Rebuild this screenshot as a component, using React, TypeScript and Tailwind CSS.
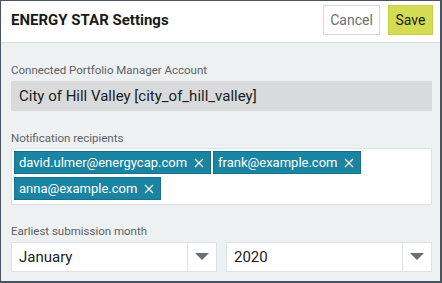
import React from "react";

const Caret = () => (
  <svg width="14" height="8" viewBox="0 0 14 8" className="block">
    <path d="M0 0 L14 0 L7 7 Z" fill="#6b6f73" />
  </svg>
);

const Chip = ({ email }: { email: string }) => (
  <div className="flex items-center h-[23px] bg-[#1a84a3] text-white text-[13px] pl-[4px] pr-[6px] gap-[7px] border border-[#17718c]">
    <span>{email}</span>
    <svg width="10" height="10" viewBox="0 0 10 10">
      <path d="M1 1 L9 9 M9 1 L1 9" stroke="white" strokeWidth="1.3" />
    </svg>
  </div>
);

const Select = ({ value }: { value: string }) => (
  <div className="flex flex-1 h-[30px] bg-white border border-[#dfe2e4]">
    <div className="flex-1 flex items-center pl-[7px] text-[15px] text-[#1c1c1c]">{value}</div>
    <div className="w-[29px] flex items-center justify-center border-l border-[#dfe2e4]">
      <Caret />
    </div>
  </div>
);

export default function App() {
  return (
    <div
      className="w-[442px] h-[283px] flex flex-col border-l border-t border-r-2 border-b-2 border-[#4a5461] bg-[#eef1f2] overflow-hidden"
      style={{ fontFamily: "Roboto, 'Liberation Sans', sans-serif" }}
    >
      <div className="h-[42px] bg-white border-b border-[#d9dcde] flex items-center pl-[10px] pr-[7px] shrink-0">
        <div className="flex-1 text-[15px] font-bold text-[#1a1a1a] pb-[3px]">ENERGY STAR Settings</div>
        <div className="flex gap-[8px] pb-[3px]">
          <div className="h-[30px] w-[57px] flex items-center justify-center border border-[#d6d9db] bg-white text-[14px] text-[#6b6f73]">Cancel</div>
          <div className="h-[30px] w-[45px] flex items-center justify-center border border-[#c8d03e] bg-[#d3dc52] text-[14px] text-[#1c1c1c]">Save</div>
        </div>
      </div>
      <div className="flex flex-col px-[10px] pr-[8px]">
        <div className="mt-[20px] text-[11.5px] text-[#5d6166] leading-[14px]">Connected Portfolio Manager Account</div>
        <div className="mt-[4px] h-[30px] bg-[#d8dadc] flex items-center pl-[8px] text-[15px] text-[#1c1c1c]">
          City of Hill Valley [city_of_hill_valley]
        </div>
        <div className="mt-[20px] text-[11.5px] text-[#5d6166] leading-[14px]">Notification recipients</div>
        <div className="mt-[3px] h-[57px] bg-white border border-[#dfe2e4] p-[2px] flex flex-wrap content-start gap-x-[2px] gap-y-[3px]">
          <Chip email="david.ulmer@energycap.com" />
          <Chip email="frank@example.com" />
          <Chip email="anna@example.com" />
        </div>
        <div className="mt-[19px] text-[11.5px] text-[#5d6166] leading-[14px]">Earliest submission month</div>
        <div className="mt-[4px] flex gap-[9px]">
          <Select value="January" />
          <Select value="2020" />
        </div>
      </div>
    </div>
  );
}
